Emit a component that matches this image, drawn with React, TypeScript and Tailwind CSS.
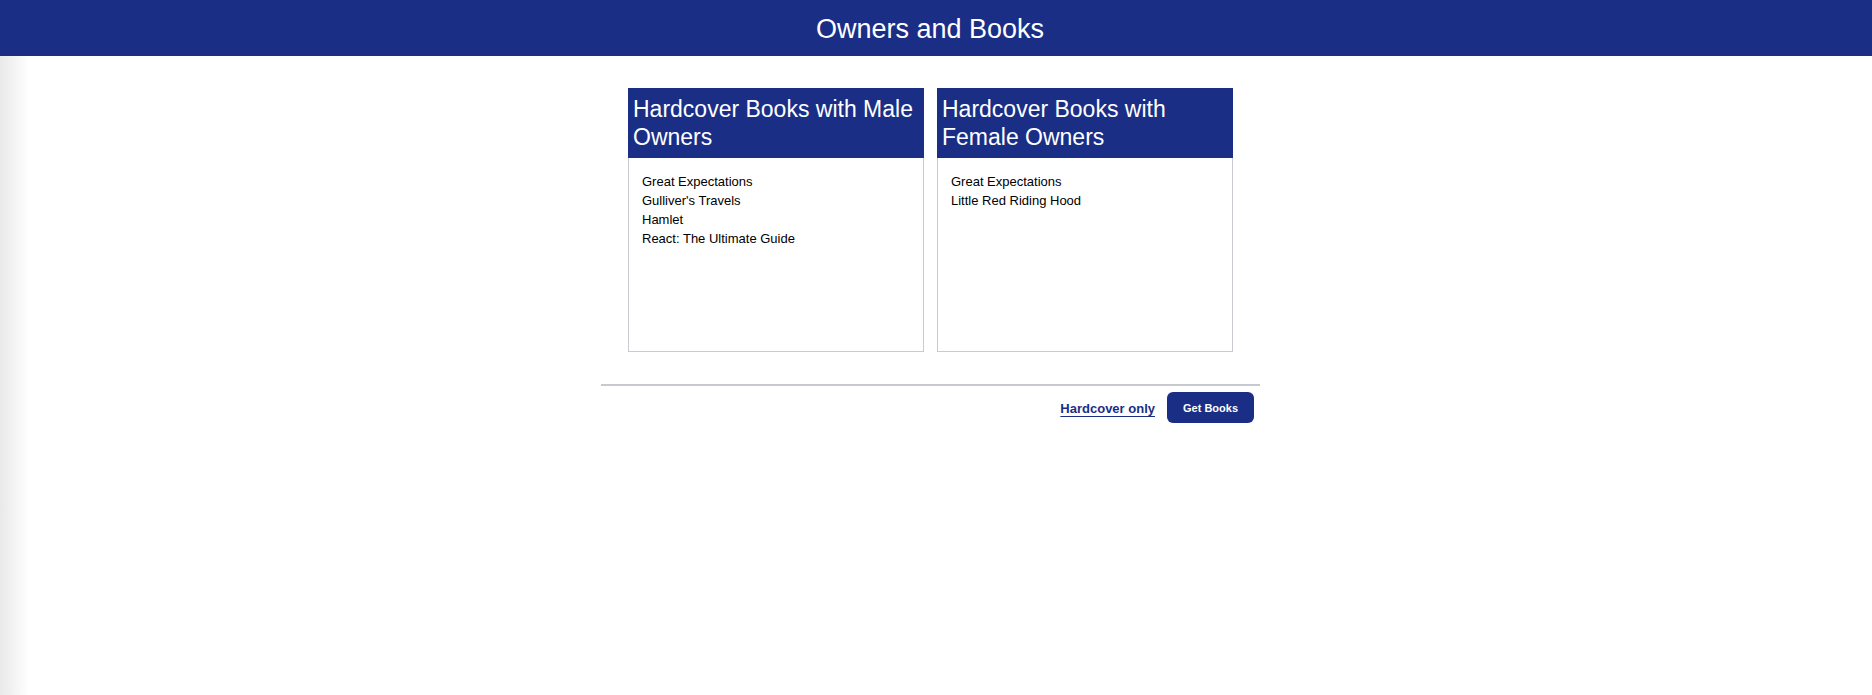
import React from "react";

const male = ["Great Expectations", "Gulliver's Travels", "Hamlet", "React: The Ultimate Guide"];
const female = ["Great Expectations", "Little Red Riding Hood"];

function Card({ title, books }: { title: string; books: string[] }) {
  return (
    <div className="w-[296px] flex flex-col">
      <div className="bg-[#1a2e86] text-white text-[23px] leading-[28px] pl-[5px] pr-[4px] pt-[7px] pb-[7px] h-[70px]">
        {title}
      </div>
      <div className="h-[194px] border border-t-0 border-[#c9cacf] bg-white px-[13px] pt-[14px]">
        <ul className="text-[13px] leading-[19px] text-black">
          {books.map((b) => (
            <li key={b}>{b}</li>
          ))}
        </ul>
      </div>
    </div>
  );
}

export default function App() {
  return (
    <div className="w-full min-h-[695px] bg-white" style={{ fontFamily: '"Liberation Sans", Arial, sans-serif' }}>
      <header className="h-[56px] bg-[#1a2e86] flex items-center justify-center pr-[12px] pt-[1px]">
        <h1 className="text-white text-[27px] leading-[32px]">Owners and Books</h1>
      </header>
      <main className="min-h-[639px] bg-[linear-gradient(to_right,#e9e9e9,#ffffff_30px)] pr-[11px] flex flex-col items-center pt-[32px]">
        <div className="flex gap-[13px]">
          <Card title="Hardcover Books with Male Owners" books={male} />
          <Card title="Hardcover Books with Female Owners" books={female} />
        </div>
        <div className="w-[659px] mt-[32px] border-t-2 border-[#c6c9d0]">
          <div className="flex justify-end items-center gap-[12px] pt-[6px] pr-[6px]">
            <a href="#" className="mt-[2px] text-[13px] font-bold text-[#1a2e86] underline underline-offset-[3px]">
              Hardcover only
            </a>
            <button className="h-[31px] w-[87px] pt-[1px] rounded-md bg-[#1a2e86] text-white text-[11px] font-bold">
              Get Books
            </button>
          </div>
        </div>
      </main>
    </div>
  );
}
